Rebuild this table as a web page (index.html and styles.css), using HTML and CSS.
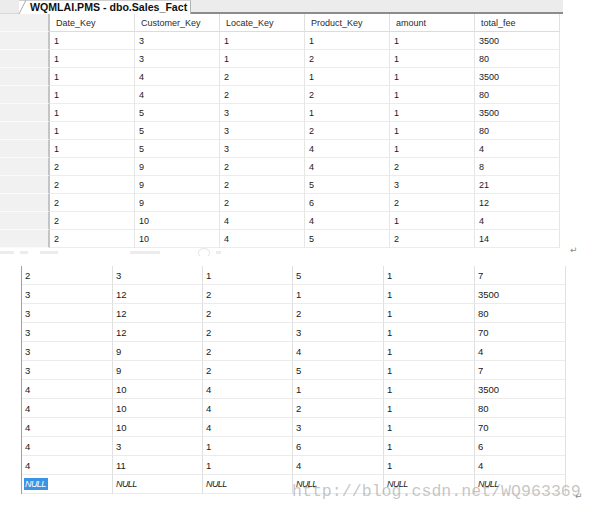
FILE: index.html
```html
<!DOCTYPE html>
<html>
<head>
<meta charset="utf-8">
<link rel="stylesheet" href="styles.css">
</head>
<body>
<div class="page">
  <div class="tabbar">
    <div class="tab-gap"></div>
    <div class="tab">
      <svg class="tab-edge" width="7" height="14" viewBox="0 0 7 14"><path d="M0 14 L7 0" stroke="#a8a8a8" stroke-width="1" fill="none"/><path d="M1 14 L7 2 L7 14 Z" fill="#fff"/></svg>
      <span class="tab-title">WQMLAI.PMS - dbo.Sales_Fact</span>
    </div>
    <div class="tab-rest"></div>
  </div>

  <div class="grid top-grid">
    <div class="rh"></div><div class="hc">Date_Key</div><div class="hc">Customer_Key</div><div class="hc">Locate_Key</div><div class="hc">Product_Key</div><div class="hc">amount</div><div class="hc">total_fee</div>
    <div class="rh"></div><div class="c">1</div><div class="c">3</div><div class="c">1</div><div class="c">1</div><div class="c">1</div><div class="c">3500</div>
    <div class="rh"></div><div class="c">1</div><div class="c">3</div><div class="c">1</div><div class="c">2</div><div class="c">1</div><div class="c">80</div>
    <div class="rh"></div><div class="c">1</div><div class="c">4</div><div class="c">2</div><div class="c">1</div><div class="c">1</div><div class="c">3500</div>
    <div class="rh"></div><div class="c">1</div><div class="c">4</div><div class="c">2</div><div class="c">2</div><div class="c">1</div><div class="c">80</div>
    <div class="rh"></div><div class="c">1</div><div class="c">5</div><div class="c">3</div><div class="c">1</div><div class="c">1</div><div class="c">3500</div>
    <div class="rh"></div><div class="c">1</div><div class="c">5</div><div class="c">3</div><div class="c">2</div><div class="c">1</div><div class="c">80</div>
    <div class="rh"></div><div class="c">1</div><div class="c">5</div><div class="c">3</div><div class="c">4</div><div class="c">1</div><div class="c">4</div>
    <div class="rh"></div><div class="c">2</div><div class="c">9</div><div class="c">2</div><div class="c">4</div><div class="c">2</div><div class="c">8</div>
    <div class="rh"></div><div class="c">2</div><div class="c">9</div><div class="c">2</div><div class="c">5</div><div class="c">3</div><div class="c">21</div>
    <div class="rh"></div><div class="c">2</div><div class="c">9</div><div class="c">2</div><div class="c">6</div><div class="c">2</div><div class="c">12</div>
    <div class="rh"></div><div class="c">2</div><div class="c">10</div><div class="c">4</div><div class="c">4</div><div class="c">1</div><div class="c">4</div>
    <div class="rh"></div><div class="c">2</div><div class="c">10</div><div class="c">4</div><div class="c">5</div><div class="c">2</div><div class="c">14</div>
  </div>

  <div class="scrap">
    <span class="blob b1"></span><span class="blob b2"></span><span class="blob b3"></span><span class="blob b4"></span><span class="circle"></span><span class="blob b5"></span>
    <span class="ret ret1">↵</span>
  </div>

  <div class="bottom-wrap">
    <div class="grid low-grid">
      <div class="d">2</div><div class="d">3</div><div class="d">1</div><div class="d">5</div><div class="d">1</div><div class="d">7</div>
      <div class="d">3</div><div class="d">12</div><div class="d">2</div><div class="d">1</div><div class="d">1</div><div class="d">3500</div>
      <div class="d">3</div><div class="d">12</div><div class="d">2</div><div class="d">2</div><div class="d">1</div><div class="d">80</div>
      <div class="d">3</div><div class="d">12</div><div class="d">2</div><div class="d">3</div><div class="d">1</div><div class="d">70</div>
      <div class="d">3</div><div class="d">9</div><div class="d">2</div><div class="d">4</div><div class="d">1</div><div class="d">4</div>
      <div class="d">3</div><div class="d">9</div><div class="d">2</div><div class="d">5</div><div class="d">1</div><div class="d">7</div>
      <div class="d">4</div><div class="d">10</div><div class="d">4</div><div class="d">1</div><div class="d">1</div><div class="d">3500</div>
      <div class="d">4</div><div class="d">10</div><div class="d">4</div><div class="d">2</div><div class="d">1</div><div class="d">80</div>
      <div class="d">4</div><div class="d">10</div><div class="d">4</div><div class="d">3</div><div class="d">1</div><div class="d">70</div>
      <div class="d">4</div><div class="d">3</div><div class="d">1</div><div class="d">6</div><div class="d">1</div><div class="d">6</div>
      <div class="d">4</div><div class="d">11</div><div class="d">1</div><div class="d">4</div><div class="d">1</div><div class="d">4</div>
      <div class="d null"><span class="sel">NULL</span></div><div class="d null">NULL</div><div class="d null">NULL</div><div class="d null">NULL</div><div class="d null">NULL</div><div class="d null">NULL</div>
    </div>
    <div class="watermark">http://blog.csdn.net/WQ963369</div>
    <span class="ret ret2">↵</span>
  </div>
</div>
</body>
</html>
```

FILE: styles.css
```css
html, body {
  margin: 0;
  padding: 0;
  background: #ffffff;
}

.page {
  width: 594px;
  height: 516px;
  overflow: hidden;
  font-family: "Liberation Sans", Arial, sans-serif;
  color: #1a1a1a;
}

/* tab strip */
.tabbar {
  display: flex;
  width: 563px;
  height: 14px;
  background: #ececec;
}
.tab-gap {
  width: 19px;
  border-bottom: 1px solid #d8d8d8;
}
.tab {
  display: flex;
  align-items: flex-start;
  height: 14px;
  background: #ffffff;
  border-right: 1px solid #b4b4b4;
  border-top: 1px solid #cfcfcf;
  box-sizing: border-box;
  padding-right: 3px;
}
.tab-edge {
  display: block;
  margin-top: -1px;
  flex: none;
}
.tab-title {
  font-weight: bold;
  font-size: 10.6px;
  line-height: 12px;
  color: #111;
  padding-left: 4px;
  white-space: nowrap;
}
.tab-rest {
  flex: 1;
  border-bottom: 2px solid #8c8c8c;
  box-sizing: border-box;
}

/* grids */
.grid {
  display: grid;
}
.top-grid {
  width: 561px;
  grid-template-columns: 50px repeat(6, 85px);
  grid-auto-rows: 18px;
  font-size: 9px;
}
.rh {
  background: #f1f1f1;
  border-bottom: 1px solid #fafafa;
  border-right: 2px solid #c4c4c4;
  box-sizing: border-box;
}
.hc, .c {
  padding-left: 6px;
  line-height: 18px;
  border-right: 1px solid #e6e6e6;
  border-bottom: 1px solid #ececec;
  box-sizing: border-box;
  white-space: nowrap;
}
.hc {
  color: #2a2a2a;
  border-bottom: 1px solid #dcdcdc;
  border-right: 1px solid #e0e0e0;
}
.c {
  padding-left: 4px;
}

/* scrap between tables */
.scrap {
  position: relative;
  height: 18px;
}
.blob {
  position: absolute;
  top: 3px;
  height: 3px;
  background: #ececec;
}
.b1 { left: 0; width: 14px; }
.b2 { left: 20px; width: 8px; }
.b3 { left: 40px; width: 18px; }
.b4 { left: 130px; width: 30px; }
.b5 { left: 216px; width: 5px; }
.circle {
  position: absolute;
  left: 198px;
  top: 0;
  width: 10px;
  height: 8px;
  border-radius: 50%;
  border: 1px solid #e6e6e6;
  border-bottom-color: transparent;
}
.ret {
  position: absolute;
  font-family: "DejaVu Sans", sans-serif;
  font-size: 9px;
  color: #8a8a8a;
}
.ret1 { left: 570px; top: -3px; }

/* lower table */
.bottom-wrap {
  position: relative;
  height: 250px;
}
.low-grid {
  margin-left: 21px;
  width: 545px;
  grid-template-columns: 91px 90px 90px 91px 91px 91px;
  grid-auto-rows: 19px;
  font-size: 9.5px;
  border-left: 1px solid #a0a0a0;
}
.d {
  padding-left: 3px;
  line-height: 19px;
  border-right: 1px solid #e0e0e0;
  border-bottom: 1px solid #ebebeb;
  box-sizing: border-box;
  white-space: nowrap;
  color: #202020;
}
.null {
  font-style: italic;
  letter-spacing: -0.6px;
  font-size: 9px;
}
.sel {
  background: #3b93e6;
  color: #ffffff;
  padding: 1px 2px 1px 1px;
  margin-left: -1px;
}
.watermark {
  position: absolute;
  left: 292px;
  top: 216px;
  font-family: "Liberation Mono", "Courier New", monospace;
  font-size: 16.6px;
  color: rgba(160, 160, 160, 0.6);
  white-space: nowrap;
}
.ret2 { left: 575px; top: 225px; }
```
